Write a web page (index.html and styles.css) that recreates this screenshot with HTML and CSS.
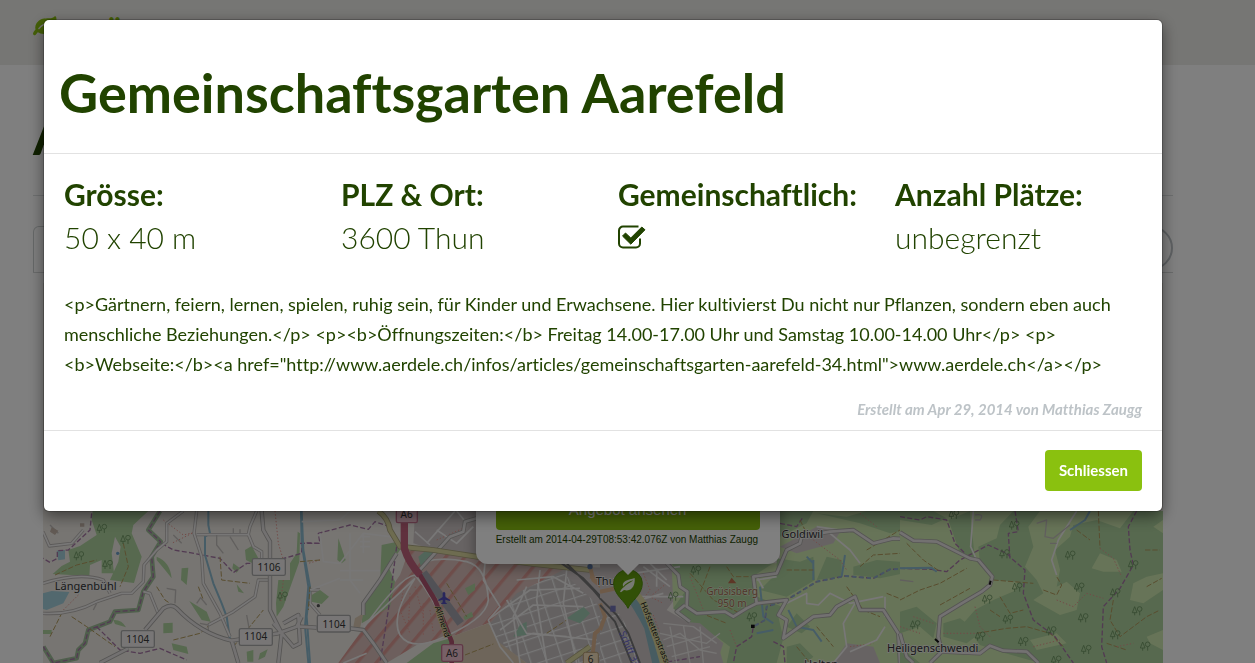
FILE: index.html
```html
<!DOCTYPE html>
<html lang="de">
<head>
<meta charset="utf-8">
<title>Gemeinschaftsgarten Aarefeld</title>
<link rel="stylesheet" href="styles.css">
</head>
<body>
<div class="page">
  <header class="navbar">
    <a class="brand" href="#">
      <svg class="brand-leaf" viewBox="0 0 24 20" aria-hidden="true"><path d="M23.500 3.500C23.500 1.500 23 .5 22.300.3C21 .3 20.500 2 18 2.300C13 2.500 9 2 5.500 5C2.500 7.500 1.800 11 2.500 13.500C1.500 14.800 0 16.500 0 17.500C0 18.500 1 19.500 2 19.300C3 19 3.800 17 4.800 16.300C7 17.500 10 18.500 14 17.500C20 16 23.800 11 23.500 3.500ZM17 7.500C12 8 9 10 6.500 13C6 13.700 4.800 13 5.300 12.200C8 8.500 12 6.300 16.700 6.200C17.600 6.200 17.700 7.400 17 7.500Z"/></svg>
      <span>gmües</span>
    </a>
  </header>
  <main class="content">
    <h1 class="page-title">Angebote</h1>
    <div class="search">
      <input class="search-field" type="text" aria-label="Suche">
      <button class="search-button" type="button" aria-label="Suchen"></button>
    </div>
    <div class="map">
      <svg class="map-canvas" viewBox="129 -651 3360 1140" preserveAspectRatio="xMidYMax slice" role="img" aria-label="Karte von Thun">
        <defs>
          <pattern id="hatch" width="44" height="44" patternUnits="userSpaceOnUse" patternTransform="rotate(40)"><rect width="44" height="44" fill="#dabfba"/><rect width="10" height="44" fill="#dc9a94"/></pattern>
          <pattern id="streets" width="46" height="38" patternUnits="userSpaceOnUse" patternTransform="rotate(-18)"><rect width="46" height="38" fill="#c9c3c2"/><path d="M0 0H46M0 0V38" stroke="#eee" stroke-width="8"/></pattern>
          <g id="trees" fill="none" stroke="#6c9562" stroke-width="2.500"><path d="M-7-12L-14 6H0ZM-7 6V14"/><circle cx="8" cy="-5" r="7"/><path d="M8 2V14"/></g>
        </defs>
        <rect class="land" x="129" y="-651" width="3360" height="1140"/>

        <!-- west: Längenbühl -->
        <g>
          <path class="forest" d="M278 33H445L400 75L395 100L425 170L402 249L330 240L355 185L362 140L345 110L335 160L342 220H305V180L270 195L268 228L158 222L185 198L210 185L205 150L240 138L290 105L275 60ZM735 150L755 138L775 175L768 195L738 180ZM893 95L900 100L898 185L850 320L830 350L828 310L835 240H870V190L890 160ZM470 170Q510 185 515 235Q500 215 470 180ZM545 205L565 203L560 255L543 240ZM568 303L620 335L632 365L605 360ZM490 370L518 368V398L490 400ZM515 430L560 440L565 462L520 450ZM740 455L760 450V485H742ZM780 460L803 448L795 470L775 480ZM700 190L720 205L710 218L697 205ZM710 253L732 280L715 275ZM129 390H155V402H129ZM340 360Q365 358 378 382L345 372Z"/>
          <path class="water" d="M129 280L155 273L208 276L190 310L140 330L129 327ZM170 152L195 150V178L175 181Z"/>
          <path class="border-glow" d="M480 33L445 90L482 125L455 170L460 230L430 275L415 330L345 335L330 365L265 390L255 430L235 450L230 475L160 489L130 440"/>
          <path class="boundary" d="M480 33L445 90L482 125L455 170L460 230L430 275L415 330L345 335L330 365L265 390L255 430L235 450L230 475L160 489L130 440M275 40L270 90L205 150L172 152V175L150 187L129 175M485 130L520 150L570 158L660 175L700 218L740 190L800 190L905 160V128L960 130M290 380L360 450L420 460L480 445L560 480"/>
          <path class="stream" d="M625 33V75L630 100L615 110V165L640 250L665 310L680 350L690 420M903 33L905 130L925 260L915 380L925 489"/>
          <path class="track" d="M215 350L260 380L345 440M165 225L230 195L290 180M370 130L385 200L360 260M660 170L665 240L750 250M150 410L185 340M595 260L610 300M700 440L790 330M520 420L600 400L640 365M470 260L495 300L510 310"/>
          <path class="footpath" d="M490 60L550 105L580 98L515 130M825 33L835 130L850 180M850 240L842 310M960 180L925 190M190 330L235 285"/>
          <path class="minor-case" d="M129 340Q215 345 290 305L365 280H395L430 245L432 195L470 150L500 125V70L550 33M129 250Q240 215 310 240L330 280M129 95L148 138L215 130L250 90M590 33L582 100L605 170L610 250L660 340L690 410M590 104L745 103L750 80L770 33M745 103L760 140L785 155V190M810 240L775 240L765 290L700 335L625 375M430 275L450 280L475 342M960 270H930V310L960 345"/>
          <path class="minor" d="M129 340Q215 345 290 305L365 280H395L430 245L432 195L470 150L500 125V70L550 33M129 250Q240 215 310 240L330 280M129 95L148 138L215 130L250 90M590 33L582 100L605 170L610 250L660 340L690 410M590 104L745 103L750 80L770 33M745 103L760 140L785 155V190M810 240L775 240L765 290L700 335L625 375M430 275L450 280L475 342M960 270H930V310L960 345"/>
          <path class="lane" d="M650 105V135L670 160M690 110L715 150M500 265L527 270L525 310M590 310L602 293L620 315M280 330L290 310M740 345L750 400M520 105L545 130M150 75L175 100M600 370L625 375V390M700 100V85M720 100V88"/>
          <path class="major-case" d="M435 390L490 325Q515 310 530 325Q600 400 695 422L835 400L890 380L905 350M785 33L790 90L810 125V330L845 400L835 489M695 422L715 489M300 489L385 445M850 370L895 345L900 430L880 440L820 370"/>
          <path class="major" d="M435 390L490 325Q515 310 530 325Q600 400 695 422L835 400L890 380L905 350M785 33L790 90L810 125V330L845 400L835 489M695 422L715 489M300 489L385 445M850 370L895 345L900 430L880 440L820 370"/>
          <use href="#trees" x="305" y="85"/><use href="#trees" x="236" y="167"/><use href="#trees" x="322" y="193"/><use href="#trees" x="376" y="118"/><use href="#trees" x="847" y="288"/>
          <g class="shields"><rect x="757" y="176" width="99" height="50" rx="5"/><rect x="364" y="392" width="99" height="50" rx="5"/><rect x="718" y="386" width="99" height="50" rx="5"/></g>
          <g class="shield-text"><text x="807" y="212">1106</text><text x="413" y="428">1104</text><text x="767" y="421">1104</text></g>
          <text class="place" x="257" y="270">Längenbühl</text>
          <path d="M155 82L175 92L165 105L150 95ZM240 70H253V80H240Z" fill="#c4b4a8"/><circle cx="353" cy="160" r="5" fill="#6d9ec8"/>
        </g>

        <!-- Allmend, motorway and airfield -->
        <g transform="translate(900 0)">
          <path fill="#cfc7c7" d="M345 33H530V165L400 150L340 130ZM560 190L960 205V489H700L565 380L600 330L590 240Z"/>
          <path fill="url(#streets)" d="M565 355L680 215L780 210L900 320L920 489H680L590 425Z"/>
          <path fill="url(#hatch)" d="M330 145L530 175L800 205L650 280L575 365L470 405L350 435L260 489H115L190 385L300 225Z"/>
          <path class="forest" d="M115 115L137 180L125 190L112 180ZM245 135L292 125L300 150L265 200L285 245L270 320L185 370L190 310L240 250ZM35 285L60 270L87 290L65 312L35 305ZM495 265L525 250V270L505 285ZM490 350L515 335L520 350L495 360ZM320 489L400 430L450 415L445 489Z"/>
          <path fill="#dccbb5" d="M450 412L565 370L595 425L680 489H460ZM165 355L190 340L180 385L160 380Z"/>
          <path fill="#a2cdb4" d="M355 170L380 150L405 160L365 210ZM660 375L680 365V405L640 410ZM800 355L850 320L870 340L840 370Z"/>
          <path d="M370 218L482 370" stroke="#a3a3ad" stroke-width="24" fill="none"/>
          <path class="boundary" d="M0 130L60 130L55 100L150 75L205 88L225 65L270 80M290 140L265 330L240 489"/>
          <path class="stream" d="M5 33L10 150L30 260L20 350L30 489"/>
          <path class="footpath" d="M310 270L300 330L330 400M330 280L325 380M345 260L370 350M370 310V410M390 330L400 400M410 120L500 80"/>
          <path class="track" d="M0 185L60 180M30 260L25 330M495 465L580 432M740 400L800 360M440 250L500 350"/>
          <path class="minor" d="M5 65L120 60L150 33M60 100L70 185L120 190L190 100L270 110L300 140M190 100V160M150 100V240L180 280M180 110H210M180 125H210M180 140H210M120 212H240M120 240H190M30 270L120 235M190 385Q300 230 345 225Q400 290 440 390M375 185Q430 170 500 185Q560 200 565 300Q560 360 410 420Q330 450 300 405Q270 350 345 235M190 380L345 235M530 170L555 190L550 240L600 320L565 360L600 440L640 489M380 130L465 33M345 95L390 135M410 90L470 130L520 80M470 33L500 70M130 489L200 460"/>
          <path class="minor" d="M570 355L690 270L840 265M600 390L700 315L850 320M610 430L700 400L890 420M650 240L760 230L850 280M720 210L710 300L740 489M800 210L790 310L830 489M680 260L640 350L660 489M620 300L680 400L800 410"/>
          <path class="major-case" d="M345 225L450 110L490 95L495 65L530 55M0 380L50 383M150 385L190 390L220 430L260 489M190 345V310L240 240L290 160"/>
          <path class="major" d="M345 225L450 110L490 95L495 65L530 55M0 380L50 383M150 385L190 390L220 430L260 489M190 345V310L240 240L290 160"/>
          <path d="M235 33Q265 55 270 90L300 140L400 150L530 170L700 192L870 210M800 489L870 440" stroke="#aaa57d" stroke-width="17" fill="none"/>
          <path d="M235 33Q265 55 270 90L300 140L400 150L530 170L700 192L870 210M800 489L870 440" stroke="#dcd8a0" stroke-width="12" fill="none"/>
          <path d="M313 65V145Q325 185 360 225L405 300L455 425V489" stroke="#b05570" stroke-width="14" fill="none"/>
          <path d="M313 65V145Q325 185 360 225" stroke="#c0627c" stroke-width="22" fill="none"/>
          <path class="amber" d="M905 320L910 380L885 400L875 489M870 200L880 240L940 290L920 310M870 230L960 250"/>
          <path class="rail" d="M785 190L850 235L960 350M800 190L880 270L960 365"/>
          <rect x="931" y="317" width="16" height="18" fill="#7272b5"/><circle cx="870" cy="200" r="8" fill="#617fac"/>
          <path d="M432 275L436 279V291L450 299V303L436 299V307L442 312H422L428 307V299L415 303V299L428 291V279Z" fill="#514cb8"/>
          <circle cx="55" cy="317" r="5" fill="#555"/>
          <g class="shields"><rect x="52" y="346" width="99" height="50" rx="5"/></g>
          <g class="shields motorway"><rect x="289" y="20" width="63" height="48" rx="5"/><rect x="425" y="434" width="63" height="50" rx="5"/></g>
          <rect x="850" y="457" width="45" height="48" rx="6" fill="#f3dfbd" stroke="#b69c73" stroke-width="3"/>
          <g class="shield-text"><text x="102" y="384">1104</text><text x="320" y="55">A6</text><text x="456" y="470">A6</text><text x="872" y="489">6</text></g>
          <text class="road-name" transform="translate(404 322) rotate(71)">Allmend</text>
        </g>

        <!-- Thun, Grüsisberg, Goldiwil -->
        <g transform="translate(1800 0)">
          <path fill="#cfc7c7" d="M0 190H220L245 270L200 330L260 365L370 420L380 489H0Z"/>
          <path fill="url(#streets)" d="M0 335L50 330L75 370L120 489H0Z"/>
          <path class="field" d="M540 33H960V489H370L350 420L220 325L215 190H540Z"/>
          <path class="forest" d="M215 190H520L465 225L460 285L545 320L535 350L550 415L530 489H380L390 440L350 410L260 365L220 325L255 275ZM540 33H640L620 70L540 110ZM530 175L600 185L640 170L645 240L560 290L480 270L530 220ZM650 40L740 50L800 33H960V80L870 100L780 70ZM680 170L725 180V230L650 240ZM760 200L830 180L960 190V210L840 235L760 225ZM590 340L630 380L605 400L560 380ZM560 440L600 430L640 470L620 489H560Z"/>
          <path fill="#cfc7c7" d="M200 360L300 370L370 430L350 489H210L180 420ZM540 140L650 80L720 95L700 130L590 160ZM700 489L740 430L820 440L840 489Z"/>
          <path d="M80 265Q120 320 150 380L175 489" stroke="#8fb9c3" stroke-width="36" fill="none"/>
          <path class="stream" d="M640 180L640 240M620 170L640 190M735 165L725 230M480 260L490 350L520 370M565 330L590 380L640 390L665 425M470 400L520 390"/>
          <path class="boundary" d="M960 205L870 208L820 235L735 228L650 245L560 300L500 320L495 360L460 380L455 410L410 440L400 489M180 489L300 470M540 70L590 80L610 50M520 425L550 440L555 489"/>
          <path class="river-line" d="M960 205L870 208L820 235L735 228L650 245L560 300L500 320L495 360L460 380"/>
          <path class="track" d="M270 220L340 300L420 340M380 200L400 230L460 230M600 60L620 100M800 150L900 90L960 130M740 260L790 330L840 350M650 380L700 440M860 280L960 320M900 380L960 360M560 210L640 210M590 440L630 489M280 330L380 370M330 200L300 280M780 200L820 165L900 160"/>
          <path class="footpath" d="M130 220L150 270L120 310M200 250L150 290L190 310M270 230L310 330M390 390L410 440M640 120L720 180L740 210M750 440L820 430M780 40L830 80M920 410L960 400M160 345L180 400"/>
          <path class="minor" d="M130 200L210 260M150 190L200 240M100 220L240 200M170 205V260M190 280L120 300M120 290H250M560 310L620 280V310L655 315L690 280L750 310L850 290M855 290V350M690 100L750 150L780 190M650 80L750 95M765 310L730 370L740 440L700 489M470 240L530 230M470 230L490 265M855 380L830 420L750 455"/>
          <path class="lane bright" d="M180 400L320 430L360 400M190 370L280 380L350 430M200 440L300 410M215 470L330 440M210 380L230 489M250 375L270 489M300 380L310 489M190 420L240 400L300 450L350 460"/>
          <path class="major-case" d="M200 190L235 225L240 260L262 275L260 320L290 340L375 335L400 350L440 325L470 310L460 230L530 220L560 150L600 130L605 110L690 95L760 90L820 130L880 115L960 120M470 310L560 300L535 345L560 360L550 415L640 350L690 345L710 320L765 290L780 330L850 330L895 400L900 489M255 315L230 335L270 365"/>
          <path class="major" d="M200 190L235 225L240 260L262 275L260 320L290 340L375 335L400 350L440 325L470 310L460 230L530 220L560 150L600 130L605 110L690 95L760 90L820 130L880 115L960 120M470 310L560 300L535 345L560 360L550 415L640 350L690 345L710 320L765 290L780 330L850 330L895 400L900 489M255 315L230 335L270 365"/>
          <path d="M100 270L130 310L170 420L190 489" stroke="#dcd8a0" stroke-width="20" fill="none"/>
          <path class="amber" d="M0 275L50 265M0 390L15 350L0 310"/>
          <path class="rail" d="M0 295L50 345L85 400L120 489M0 315L45 365L95 489"/>
          <rect x="31" y="317" width="16" height="18" fill="#7272b5"/>
          <path d="M395 233L409 250H384Z" fill="#bb6d4d"/><rect x="453" y="374" width="11" height="10" fill="#111"/>
          <use href="#trees" x="287" y="210"/><use href="#trees" x="219" y="288"/><use href="#trees" x="455" y="350"/>
          <text class="peak" x="396" y="286">Grüsisberg</text><text class="peak" x="396" y="321">950 m</text>
          <text class="place" x="607" y="115">Goldiwil</text>
          <text class="place" x="663" y="503">Halten</text>
          <text class="road-name" transform="translate(121 310) rotate(68)">Hofstettenstrasse</text>
          <text class="ferry" transform="translate(58 398) rotate(67)">Schiff 33</text>
          <text class="place" x="27" y="254">Thun</text>
        </g>

        <!-- east: Heiligenschwendi -->
        <g transform="translate(2700 0)">
          <path class="field" d="M0 33H789V489H0Z"/>
          <path class="forest" d="M0 33H100L140 55L95 75L0 60ZM145 60L210 33L225 180L180 160ZM235 140L290 115L300 75L340 33H420L385 80L400 140L375 200L410 240L430 280L400 300L480 345L530 330L540 280L500 245L470 260L480 210L465 150L510 110L520 75L590 60L660 85L700 33H789V60L760 80L789 100V220L740 230L700 250L690 300L730 310L789 270V400L750 430L789 450V489H420L300 455L240 435L190 370L225 330L280 300L350 270L350 245L280 240L240 190ZM0 335L50 320L110 370L100 415L60 380L0 400ZM130 370L180 355L240 400L200 430L130 410ZM0 440L60 489H0Z"/>
          <path class="field" d="M575 205L600 160L650 180L665 215L610 215ZM740 410L789 390V425L750 430ZM390 420L470 400L500 430L410 450Z"/>
          <path class="boundary" d="M0 50L60 60L80 50L140 60L165 130L195 160M0 205L95 208L140 215L180 180L265 135L320 160L340 180L375 210L370 280L400 360L465 410L520 489M345 33L355 95L325 100L330 180M710 33L685 80L690 150L700 195L660 265L610 320L605 440L620 489"/>
          <path class="stream" d="M0 205L95 203L110 215M570 33L555 60L510 90"/>
          <path class="track" d="M20 130L70 180L120 215M0 300L60 270L120 250L200 205M120 315L210 265M280 240L400 250M430 270L470 285L485 255L470 230M595 33L600 145M640 300L630 360L660 410L740 350L780 330M300 290L330 340L370 330M230 400L320 385L380 380L450 400L490 440M620 430L680 450M740 260L785 235M530 90L570 120M735 150H780M270 330L300 350"/>
          <path class="footpath" d="M600 145L640 175L665 230M470 300L520 320L560 280L610 295M225 320L240 380L270 410M400 440L480 420M40 350L100 370M130 400L240 400M650 440L700 430M0 380L60 400"/>
          <path class="minor" d="M530 33L475 120L455 180L470 225M220 33L212 140L230 180"/>
          <path class="lane" d="M410 70L440 60L435 110L460 115L510 75M450 130H470M225 45Q255 40 240 60L225 60M0 240L40 245"/>
          <path class="major-case" d="M0 97L40 122L110 125L210 175L235 180L277 230L270 255L245 275L185 310L120 350L115 410L125 455L90 489M125 455L240 460L270 437L310 452L380 455L415 489M0 400L20 470L40 489"/>
          <path class="major" d="M0 97L40 122L110 125L210 175L235 180L277 230L270 255L245 275L185 310L120 350L115 410L125 455L90 489M125 455L240 460L270 437L310 452L380 455L415 489M0 400L20 470L40 489"/>
          <use href="#trees" x="161" y="43"/><use href="#trees" x="342" y="75"/><use href="#trees" x="313" y="161"/><use href="#trees" x="510" y="165"/><use href="#trees" x="699" y="194"/><use href="#trees" x="351" y="261"/><use href="#trees" x="537" y="261"/><use href="#trees" x="261" y="297"/><use href="#trees" x="645" y="278"/><use href="#trees" x="711" y="332"/><use href="#trees" x="323" y="357"/><use href="#trees" x="549" y="353"/><use href="#trees" x="45" y="374"/><use href="#trees" x="453" y="392"/><use href="#trees" x="240" y="408"/><use href="#trees" x="369" y="424"/><use href="#trees" x="645" y="404"/><use href="#trees" x="558" y="448"/><use href="#trees" x="735" y="438"/><use href="#trees" x="468" y="480"/>
          <path d="M105 417L116 427M272 242L269 254" stroke="#111" stroke-width="6"/>
          <text class="place" x="98" y="455">Heiligenschwendi</text>
        </g>
        <path d="M1884 325C1876 304 1841 285 1841 250A43 41 0 0 1 1927 250C1927 285 1892 304 1884 325Z" fill="#65a00e" stroke="#53900c" stroke-width="3"/>
        <path d="M1860 275C1864 267 1868 264 1872 261C1885 249 1891 249 1900 241C1886 244 1877 252 1869 260C1865 241 1885 240 1904 234C1906 252 1898 277 1872 270L1863 277Z" fill="#eef4e8"/>
      </svg>
      <div class="popup">
        <button class="popup-button" type="button">Angebot ansehen</button>
        <p class="popup-meta">Erstellt am 2014-04-29T08:53:42.076Z von Matthias Zaugg</p>
      </div>
    </div>
  </main>
</div>

<div class="backdrop">
  <section class="modal" role="dialog" aria-modal="true" aria-labelledby="modal-title">
    <header class="modal-header"><h2 class="modal-title" id="modal-title">Gemeinschaftsgarten Aarefeld</h2></header>
    <div class="modal-body">
      <dl class="facts">
        <div class="fact"><dt>Grösse:</dt><dd>50 x 40 m</dd></div>
        <div class="fact"><dt>PLZ &amp; Ort:</dt><dd>3600 Thun</dd></div>
        <div class="fact"><dt>Gemeinschaftlich:</dt><dd><svg class="check" viewBox="0 0 28 24" role="img" aria-label="Ja"><path d="M20.500 1.600H5A4 4 0 0 0 1 5.600V18.500A4 4 0 0 0 5 22.500H18A4 4 0 0 0 22 18.500V13.500" fill="none" stroke="currentColor" stroke-width="2"/><path d="M5 10.500L7.500 8L12.800 13L23.800 2L27 4.800L12.800 19.200L4.500 11Z" fill="currentColor" stroke="currentColor" stroke-linejoin="round"/></svg></dd></div>
        <div class="fact"><dt>Anzahl Plätze:</dt><dd>unbegrenzt</dd></div>
      </dl>
      <p class="description">&lt;p&gt;Gärtnern, feiern, lernen, spielen, ruhig sein, für Kinder und Erwachsene. Hier kultivierst Du nicht nur Pflanzen, sondern eben auch menschliche Beziehungen.&lt;/p&gt; &lt;p&gt;&lt;b&gt;Öffnungszeiten:&lt;/b&gt; Freitag 14.00-17.00 Uhr und Samstag 10.00-14.00 Uhr&lt;/p&gt; &lt;p&gt;&lt;b&gt;Webseite:&lt;/b&gt;&lt;a href="http://www.aerdele.ch/infos/articles/gemeinschaftsgarten-aarefeld-34.html"&gt;www.aerdele.ch&lt;/a&gt;&lt;/p&gt;</p>
      <p class="meta">Erstellt am Apr 29, 2014 von Matthias Zaugg</p>
    </div>
    <footer class="modal-footer"><button class="close-button" type="button">Schliessen</button></footer>
  </section>
</div>
</body>
</html>
```

FILE: styles.css
```css
* { box-sizing: border-box; }
html, body { height: 100%; }
body { margin: 0; overflow: hidden; font-family: Lato, "Liberation Sans", sans-serif; font-size: 18px; font-variant-ligatures: none; color: #214300; background: #fff; }
h1, h2, p, dl, dd { margin: 0; }
button { font: inherit; cursor: pointer; }

.page { height: 100%; overflow: hidden; display: flex; flex-direction: column; }
.navbar { flex: none; height: 65px; padding: 8px 82px 0 33px; background: #edece8; }
.brand { display: flex; gap: 8px; color: #8ac10f; font-size: 30px; line-height: 38px; font-weight: 700; text-decoration: none; }
.brand-leaf { width: 24px; height: 20px; margin-top: 8px; fill: currentColor; }
.content { flex: 1; padding: 0 82px 0 33px; display: flex; flex-direction: column; }
.page-title { padding: 37px 0 28px; font-size: 54px; line-height: 65px; font-weight: 700; border-bottom: 1px solid #dcdfe0; }
.search { display: flex; justify-content: space-between; margin-top: 30px; height: 47px; border-bottom: 1px solid #d5d8d8; }
.search-field { width: 60%; border: 1px solid #cdd2d2; border-bottom: 0; border-radius: 6px 6px 0 0; background: #fff; }
.search-button { width: 44px; height: 44px; border: 2px solid #bdc3c7; border-radius: 50%; background: #fff; }

.map { position: relative; flex: 1; margin: 10px 10px 0; min-height: 0; }
.map-canvas { display: block; width: 100%; height: 100%; }
.land { fill: #eeeae4; }
.forest { fill: #aed29e; }
.field { fill: #cfe8b0; }
.water { fill: #a5d0dc; }
.map-canvas path { stroke-linejoin: round; }
.border-glow, .boundary, .stream, .track, .footpath, .minor-case, .minor, .lane, .major-case, .major, .amber, .rail, .river-line { fill: none; }
.border-glow { stroke: #9fbe99; stroke-width: 14; }
.boundary { stroke: #a576a5; stroke-width: 4; stroke-dasharray: 15 7; }
.stream { stroke: #8dbacf; stroke-width: 6; }
.river-line { stroke: #8dabc9; stroke-width: 6; stroke-dasharray: 12 10; }
.track { stroke: #b39b5e; stroke-width: 3; stroke-dasharray: 16 6; }
.footpath { stroke: #e69790; stroke-width: 3; stroke-dasharray: 4 6; }
.minor-case { stroke: #b9b5b3; stroke-width: 10; }
.minor { stroke: #f0efee; stroke-width: 5; }
.lane { stroke: #c3bfbc; stroke-width: 4; }
.bright { stroke: #ebe9e7; }
.major-case { stroke: #aaa8a6; stroke-width: 13; }
.major { stroke: #e6e3e3; stroke-width: 8; }
.amber { stroke: #dcb590; stroke-width: 12; }
.rail { stroke: #777; stroke-width: 6; }
.shields { fill: #f0eded; stroke: #aaa; stroke-width: 4; }
.motorway { fill: #efc1cf; stroke: #c3738f; }
.map-canvas text { font-family: "Noto Sans", sans-serif; }
.shield-text { font-size: 30px; text-anchor: middle; fill: #383838; }
.place { font-size: 33px; text-anchor: middle; fill: #343434; stroke: #eee; stroke-width: 4; paint-order: stroke; }
.peak { font-size: 30px; text-anchor: middle; fill: #a16a51; stroke: #dcebd0; stroke-width: 3; paint-order: stroke; }
.road-name { font-size: 25px; fill: #191919; stroke: #dcd8a0; stroke-width: 4; paint-order: stroke; }
.ferry { font-size: 28px; fill: #6868d2; }

.popup { position: absolute; left: 52.2%; bottom: 99px; width: 304px; padding: 20px 20px 17px; transform: translateX(-50%); border-radius: 12px; background: #fff; box-shadow: 0 3px 14px rgba(0, 0, 0, .4); }
.popup::after { content: ""; position: absolute; left: 50%; top: 100%; margin-left: -11px; border: 11px solid transparent; border-top-color: #fff; border-bottom: 0; }
.popup-button { display: block; width: 100%; padding: 8px 0; border: 0; border-radius: 4px; font: 15px/24px "Liberation Sans", Arial, sans-serif; color: #fff; background: #8ac10f; }
.popup-meta { margin-top: 3px; font: 10px/14px "Liberation Sans", Arial, sans-serif; white-space: nowrap; }

.backdrop { position: fixed; inset: 0; padding: 20px 93px 20px 44px; overflow: auto; background: rgba(0, 0, 0, .5); }
.modal { background: #fff; border-radius: 5px; box-shadow: 0 0 0 1px rgba(0, 0, 0, .2), 0 5px 15px rgba(0, 0, 0, .5); }
.modal-header { padding: 40px 15px 28px; border-bottom: 1px solid #e2e2e2; }
.modal-title { font-size: 54px; line-height: 65px; font-weight: 700; }
.modal-body { padding: 19px 20px 10px; }
.facts { display: grid; grid-template-columns: repeat(4, 1fr); column-gap: 30px; font-size: 30px; line-height: 43px; }
.fact { white-space: nowrap; }
.fact dt { font-weight: 700; }
.fact dd { font-weight: 300; }
.check { display: block; width: 28px; height: 24px; margin-top: 9px; }
.description { margin-top: 30px; line-height: 30px; }
.meta { margin-top: 20px; font-size: 15px; line-height: 21px; font-weight: 700; font-style: italic; text-align: right; color: #bdc3c7; }
.modal-footer { padding: 19px 20px 20px; text-align: right; border-top: 1px solid #e2e2e2; }
.close-button { padding: 10px 14px; border: 0; border-radius: 4px; font-size: 15px; line-height: 21px; font-weight: 700; color: #fff; background: #8ac10f; }
```
